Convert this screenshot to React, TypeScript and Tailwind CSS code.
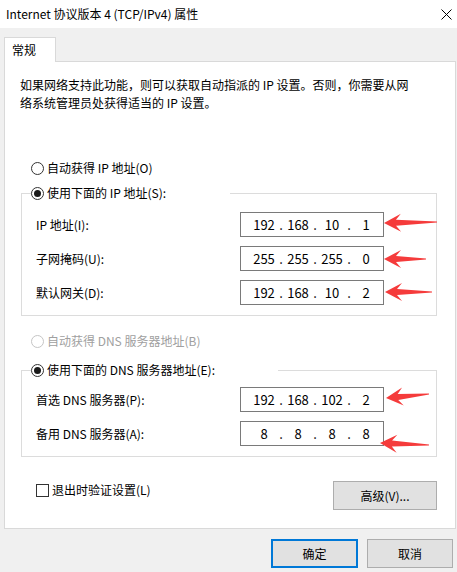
import React from "react";

type Pt = [number, number];

function arrowPoints(tip: Pt, tail: Pt): string {
  const [tx, ty] = tip;
  const [ex, ey] = tail;
  const len = Math.hypot(ex - tx, ey - ty);
  const dx = (ex - tx) / len;
  const dy = (ey - ty) / len;
  const nx = -dy;
  const ny = dx;
  const p = (a: number, b: number): string =>
    `${(tx + dx * a + nx * b).toFixed(2)},${(ty + dy * a + ny * b).toFixed(2)}`;
  const q = (b: number): string =>
    `${(ex + nx * b).toFixed(2)},${(ey + ny * b).toFixed(2)}`;
  return [p(0, 0), p(17, 9), p(12, 3), q(0.6), q(-0.6), p(12, -3), p(17, -9)].join(" ");
}

const arrows: [Pt, Pt][] = [
  [[384, 223], [437, 222]],
  [[384, 259], [426, 259]],
  [[385, 292], [432, 292]],
  [[386, 398], [429, 394]],
  [[380, 443], [429, 445]],
];

function Radio({ checked, disabled, label }: { checked?: boolean; disabled?: boolean; label: string }) {
  return (
    <div className="flex items-center h-[18px]">
      <div
        className={
          "w-[13px] h-[13px] rounded-full border bg-white flex items-center justify-center shrink-0 " +
          (disabled ? "border-[#c5c5c5]" : "border-[#333333]")
        }
      >
        {checked ? <div className="w-[7px] h-[7px] rounded-full bg-[#1a1a1a]" /> : null}
      </div>
      <span className={"ml-[3px] whitespace-nowrap " + (disabled ? "text-[#a0a0a0]" : "text-black")}>{label}</span>
    </div>
  );
}

function IpBox({ parts }: { parts: string[] }) {
  return (
    <div className="w-[144px] h-[25px] border border-[#7a7a7a] bg-white flex items-center pl-[9px] text-[13px]">
      {parts.map((p, i) => (
        <React.Fragment key={i}>
          <span className="w-[28px] text-center">{p}</span>
          {i < 3 ? <span className="w-[6px] text-center">.</span> : null}
        </React.Fragment>
      ))}
    </div>
  );
}

function Row({ label, parts }: { label: string; parts: string[] }) {
  return (
    <div className="flex items-center justify-between pl-[14px] pr-[52px]">
      <span className="whitespace-nowrap">{label}</span>
      <IpBox parts={parts} />
    </div>
  );
}

export default function App() {
  return (
    <div className="relative w-[457px] h-[572px] bg-[#f0f0f0] flex flex-col text-[12px] text-black font-['Noto_Sans_CJK_SC',sans-serif] overflow-hidden">
      <div className="h-[28px] bg-white flex items-center justify-between pl-[6px] pr-[5px] shrink-0">
        <span className="text-[12px]">Internet 协议版本 4 (TCP/IPv4) 属性</span>
        <svg width="11" height="11" viewBox="0 0 11 11">
          <path d="M0.5 0.5 L10.5 10.5 M10.5 0.5 L0.5 10.5" stroke="#000" strokeWidth="1" />
        </svg>
      </div>

      <div className="mt-[9px] pl-[4px] flex shrink-0">
        <div className="relative z-10 -mb-px w-[52px] h-[25px] bg-white border border-[#d9d9d9] border-b-0 flex items-center pl-[7px]">
          常规
        </div>
      </div>

      <div className="ml-[4px] w-[452px] h-[468px] border border-[#d9d9d9] bg-white flex flex-col shrink-0">
        <p className="pl-[15px] pt-[14px] leading-[18px]">
          如果网络支持此功能，则可以获取自动指派的 IP 设置。否则，你需要从网
          <br />
          络系统管理员处获得适当的 IP 设置。
        </p>

        <div className="mt-[47px] ml-[26px]">
          <Radio label="自动获得 IP 地址(O)" />
        </div>

        <fieldset className="mt-[7px] ml-[16px] w-[416px] border border-[#dcdcdc] px-0 pt-[10px] pb-[10px]">
          <legend className="ml-[9px] w-[199px] bg-white">
            <Radio checked label="使用下面的 IP 地址(S):" />
          </legend>
          <div className="flex flex-col gap-[9px]">
            <Row label="IP 地址(I):" parts={["192", "168", "10", "1"]} />
            <Row label="子网掩码(U):" parts={["255", "255", "255", "0"]} />
            <Row label="默认网关(D):" parts={["192", "168", "10", "2"]} />
          </div>
        </fieldset>

        <div className="mt-[16px] ml-[26px]">
          <Radio disabled label="自动获得 DNS 服务器地址(B)" />
        </div>

        <fieldset className="mt-[11px] ml-[16px] w-[416px] border border-[#dcdcdc] px-0 pt-[8px] pb-[10px]">
          <legend className="ml-[9px] w-[247px] bg-white">
            <Radio checked label="使用下面的 DNS 服务器地址(E):" />
          </legend>
          <div className="flex flex-col gap-[9px]">
            <Row label="首选 DNS 服务器(P):" parts={["192", "168", "102", "2"]} />
            <Row label="备用 DNS 服务器(A):" parts={["8", "8", "8", "8"]} />
          </div>
        </fieldset>

        <div className="mt-[24px] pl-[31px] pr-[18px] flex items-start justify-between">
          <div className="flex items-center h-[18px]">
            <div className="w-[13px] h-[13px] border border-[#333333] bg-white shrink-0" />
            <span className="ml-[3px]">退出时验证设置(L)</span>
          </div>
          <div className="w-[104px] h-[29px] bg-[#e1e1e1] border border-[#adadad] flex items-center justify-center">
            高级(V)...
          </div>
        </div>
      </div>

      <div className="mt-[10px] pr-[4px] flex justify-end gap-[9px] shrink-0">
        <div className="w-[87px] h-[29px] bg-[#e1e1e1] border-2 border-[#0078d7] flex items-center justify-center">
          确定
        </div>
        <div className="w-[86px] h-[29px] bg-[#e1e1e1] border border-[#adadad] flex items-center justify-center">
          取消
        </div>
      </div>

      <svg className="absolute left-0 top-0 pointer-events-none" width="457" height="572" viewBox="0 0 457 572">
        {arrows.map(([tip, tail], i) => (
          <polygon key={i} points={arrowPoints(tip, tail)} fill="#f53b3b" />
        ))}
      </svg>
    </div>
  );
}
